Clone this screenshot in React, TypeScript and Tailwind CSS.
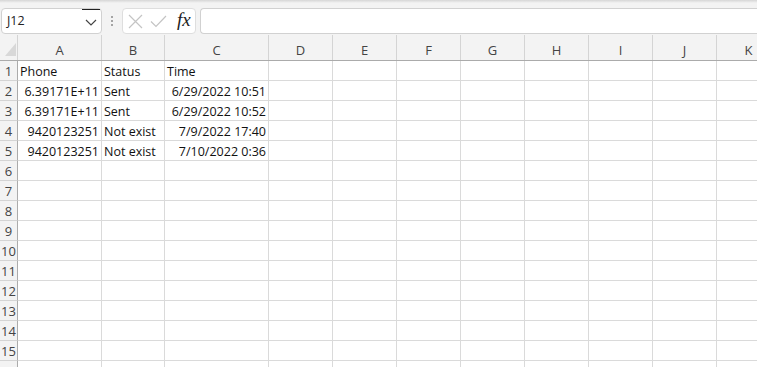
import React from "react";

const cols = ["A", "B", "C", "D", "E", "F", "G", "H", "I", "J", "K"];
const widths = ["w-[84px]", "w-[63px]", "w-[104px]", "w-[64px]", "w-[64px]", "w-[64px]", "w-[64px]", "w-[64px]", "w-[64px]", "w-[64px]", "w-[64px]"];

type Cell = { t: string; right?: boolean };
const data: Cell[][] = [
  [{ t: "Phone" }, { t: "Status" }, { t: "Time" }],
  [{ t: "6.39171E+11", right: true }, { t: "Sent" }, { t: "6/29/2022 10:51", right: true }],
  [{ t: "6.39171E+11", right: true }, { t: "Sent" }, { t: "6/29/2022 10:52", right: true }],
  [{ t: "9420123251", right: true }, { t: "Not exist" }, { t: "7/9/2022 17:40", right: true }],
  [{ t: "9420123251", right: true }, { t: "Not exist" }, { t: "7/10/2022 0:36", right: true }],
];

export default function App() {
  const rows = Array.from({ length: 16 }, (_, i) => i + 1);
  return (
    <div className="w-[757px] h-[367px] overflow-hidden bg-white relative" style={{ fontFamily: "'Open Sans', 'Noto Sans', sans-serif" }}>
      {/* toolbar */}
      <div className="h-[35px] bg-[#f3f3f3] relative flex items-start pt-[8px]">
        <div className="absolute top-0 left-0 right-0 h-[3px] bg-gradient-to-b from-[#d6d6d6] to-[#f3f3f3]" />
        <div className="ml-[1px] w-[101px] h-[26px] bg-white border border-[#d1d1d1] rounded-[4px] flex items-center relative shrink-0">
          <span className="pl-[5px] text-[12.5px] text-[#222]">J12</span>
          <div className="absolute right-[1px] top-[0px] w-[18px] h-[1px] bg-[#222]" />
          <svg className="absolute right-[4px] top-[10px]" width="12" height="7" viewBox="0 0 12 7">
            <polyline points="1,1 6,6 11,1" fill="none" stroke="#444" strokeWidth="1.2" />
          </svg>
        </div>
        <div className="w-[20px] h-[26px] flex flex-col items-center justify-center gap-[2px] shrink-0">
          <div className="w-[2px] h-[2px] bg-[#8a8a8a] rounded-full" />
          <div className="w-[2px] h-[2px] bg-[#8a8a8a] rounded-full" />
          <div className="w-[2px] h-[2px] bg-[#8a8a8a] rounded-full" />
        </div>
        <div className="w-[74px] h-[26px] bg-white border border-[#dedede] rounded-[4px] flex items-center shrink-0 relative">
          <svg className="absolute left-[5px] top-[5px]" width="15" height="15" viewBox="0 0 15 15">
            <path d="M1 1 L14 14 M14 1 L1 14" stroke="#c4c4c4" strokeWidth="1.2" fill="none" />
          </svg>
          <svg className="absolute left-[27px] top-[6px]" width="17" height="13" viewBox="0 0 17 13">
            <polyline points="1,6.5 6,11.5 16,1" stroke="#c4c4c4" strokeWidth="1.2" fill="none" />
          </svg>
          <span className="absolute left-[54px] top-[1px] text-[19px] italic text-[#222] leading-[20px]" style={{ fontFamily: "'Liberation Serif', serif" }}>fx</span>
        </div>
        <div className="ml-[4px] flex-1 h-[26px] bg-white border border-[#d1d1d1] rounded-l-[4px] border-r-0" />
      </div>

      {/* header row */}
      <div className="flex h-[26px] bg-[#f3f3f3] border-b border-[#ababab]">
        <div className="w-[18px] shrink-0 border-r border-[#d4d4d4] relative">
          <svg className="absolute left-[5px] top-[8px]" width="11" height="13" viewBox="0 0 11 13">
            <polygon points="11,0 11,13 0,13" fill="#d8d8d8" />
          </svg>
        </div>
        {cols.map((c, i) => (
          <div key={c} className={`${widths[i]} shrink-0 border-r border-[#d4d4d4] flex items-center justify-center pt-[7px] text-[13px] text-[#444]`}>
            {c}
          </div>
        ))}
      </div>

      {/* rows */}
      {rows.map((r) => (
        <div key={r} className="flex h-[20px]">
          <div className="w-[18px] shrink-0 bg-[#f3f3f3] border-r border-b border-r-[#ababab] border-b-[#d4d4d4] flex items-center justify-center text-[13px] text-[#444] leading-[20px]">
            {r <= 15 ? r : ""}
          </div>
          {cols.map((c, i) => {
            const cell = data[r - 1]?.[i];
            return (
              <div
                key={c}
                className={`${widths[i]} shrink-0 border-r border-b border-[#dadada] text-[12.5px] text-[#111] leading-[20px] pt-[1px] whitespace-nowrap overflow-visible pl-[2px] pr-[2px] ${cell?.right ? "text-right" : "text-left"}`}
              >
                {cell?.t ?? ""}
              </div>
            );
          })}
        </div>
      ))}
    </div>
  );
}
